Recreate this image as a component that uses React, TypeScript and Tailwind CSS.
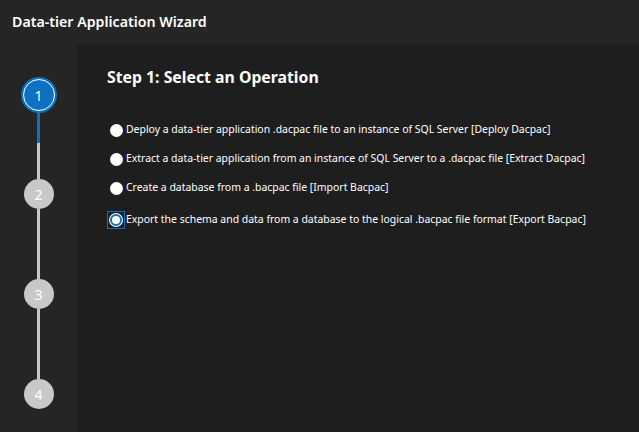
const options = [
  'Deploy a data-tier application .dacpac file to an instance of SQL Server [Deploy Dacpac]',
  'Extract a data-tier application from an instance of SQL Server to a .dacpac file [Extract Dacpac]',
  'Create a database from a .bacpac file [Import Bacpac]',
  'Export the schema and data from a database to the logical .bacpac file format [Export Bacpac]',
];

function Step({ n, active }: { n: number; active?: boolean }) {
  if (active) {
    return (
      <div className="w-[36px] h-[36px] rounded-full bg-[#0e70c0] flex items-center justify-center shrink-0">
        <div className="w-[32px] h-[32px] rounded-full border border-white flex items-center justify-center text-white text-[14px]">
          {n}
        </div>
      </div>
    );
  }
  return (
    <div className="w-[30px] h-[30px] rounded-full bg-[#c8c8c8] flex items-center justify-center text-white text-[14px] shrink-0">
      {n}
    </div>
  );
}

export default function App() {
  const selected = 3;
  return (
    <div
      className="w-[639px] h-[432px] bg-[#252526] flex flex-col overflow-hidden"
      style={{ fontFamily: '"Noto Sans", "Open Sans", sans-serif' }}
    >
      <div className="h-[44px] shrink-0 flex items-center px-3 text-white font-semibold text-[14.2px]">
        Data-tier Application Wizard
      </div>
      <div className="flex flex-1">
        <div className="w-[77px] shrink-0 flex flex-col items-center pt-[33px]">
          <Step n={1} active />
          <div className="w-[3px] h-[66px] flex flex-col">
            <div className="h-[30px] bg-[#0e70c0]" />
            <div className="flex-1 bg-[#c8c8c8]" />
          </div>
          <Step n={2} />
          <div className="w-[3px] h-[70px] bg-[#c8c8c8]" />
          <Step n={3} />
          <div className="w-[3px] h-[70px] bg-[#c8c8c8]" />
          <Step n={4} />
        </div>
        <div className="flex-1 bg-[#1e1e1e] pl-[30px] pt-[22px]">
          <h1 className="text-white font-bold text-[15.8px] leading-[22px]">Step 1: Select an Operation</h1>
          <div className="mt-[34px] flex flex-col gap-[13px]">
            {options.map((o, i) => (
              <div
                key={o}
                className={
                  i === selected
                    ? 'flex items-center h-[16px] mt-[3px] text-white text-[10.45px]'
                    : 'flex items-center h-[16px] text-white text-[10.45px]'
                }
              >
                <div
                  className={
                    i === selected
                      ? 'w-[18px] h-[18px] border border-[#0e70c0] flex items-center justify-center'
                      : 'w-[18px] h-[18px] flex items-center justify-center'
                  }
                >
                  {i === selected ? (
                    <div className="w-[14px] h-[14px] rounded-full bg-white flex items-center justify-center">
                      <div className="w-[12px] h-[12px] rounded-full border-[2px] border-[#0e70c0] bg-white" />
                    </div>
                  ) : (
                    <div className="w-[13px] h-[13px] rounded-full bg-white" />
                  )}
                </div>
                <span className="ml-[1px] whitespace-nowrap">{o}</span>
              </div>
            ))}
          </div>
        </div>
      </div>
    </div>
  );
}
